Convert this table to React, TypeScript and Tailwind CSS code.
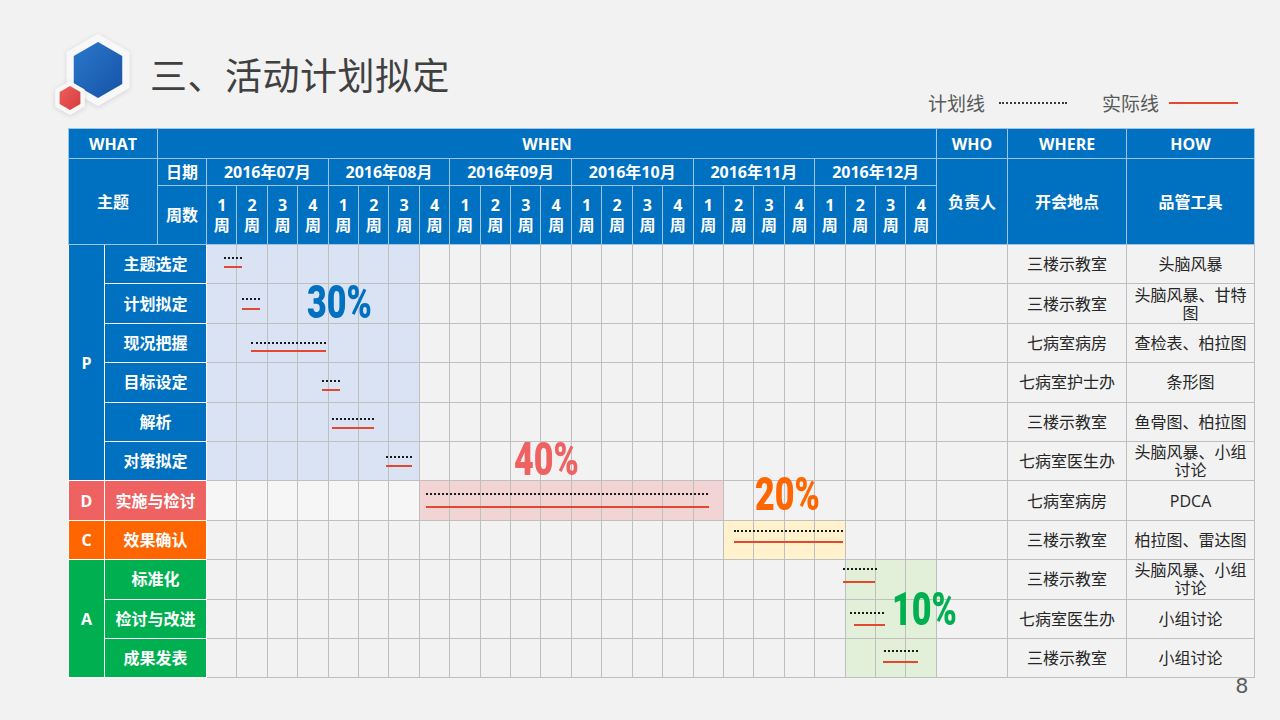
import React from 'react';

type Row = {
  phase?: { label: string; span: number; bg: string };
  theme: string;
  bg: string;
  where: string;
  how: string;
  shadeFrom: number;
  shadeTo: number;
  shade: string;
  rest?: string;
};

const rows: Row[] = [
  { phase: { label: 'P', span: 6, bg: 'bg-[#0070c0]' }, theme: '主题选定', bg: 'bg-[#0070c0]', where: '三楼示教室', how: '头脑风暴', shadeFrom: 0, shadeTo: 6, shade: 'bg-[#dae3f3]' },
  { theme: '计划拟定', bg: 'bg-[#0070c0]', where: '三楼示教室', how: '头脑风暴、甘特图', shadeFrom: 0, shadeTo: 6, shade: 'bg-[#dae3f3]' },
  { theme: '现况把握', bg: 'bg-[#0070c0]', where: '七病室病房', how: '查检表、柏拉图', shadeFrom: 0, shadeTo: 6, shade: 'bg-[#dae3f3]' },
  { theme: '目标设定', bg: 'bg-[#0070c0]', where: '七病室护士办', how: '条形图', shadeFrom: 0, shadeTo: 6, shade: 'bg-[#dae3f3]' },
  { theme: '解析', bg: 'bg-[#0070c0]', where: '三楼示教室', how: '鱼骨图、柏拉图', shadeFrom: 0, shadeTo: 6, shade: 'bg-[#dae3f3]' },
  { theme: '对策拟定', bg: 'bg-[#0070c0]', where: '七病室医生办', how: '头脑风暴、小组讨论', shadeFrom: 0, shadeTo: 6, shade: 'bg-[#dae3f3]' },
  { phase: { label: 'D', span: 1, bg: 'bg-[#ee6262]' }, theme: '实施与检讨', bg: 'bg-[#ee6262]', where: '七病室病房', how: 'PDCA', shadeFrom: 7, shadeTo: 16, shade: 'bg-[#f2d4d4]', rest: 'lighter' },
  { phase: { label: 'C', span: 1, bg: 'bg-[#ff6600]' }, theme: '效果确认', bg: 'bg-[#ff6600]', where: '三楼示教室', how: '柏拉图、雷达图', shadeFrom: 17, shadeTo: 20, shade: 'bg-[#fff2cc]' },
  { phase: { label: 'A', span: 3, bg: 'bg-[#00b050]' }, theme: '标准化', bg: 'bg-[#00b050]', where: '三楼示教室', how: '头脑风暴、小组讨论', shadeFrom: 21, shadeTo: 23, shade: 'bg-[#e2f0d9]' },
  { theme: '检讨与改进', bg: 'bg-[#00b050]', where: '七病室医生办', how: '小组讨论', shadeFrom: 21, shadeTo: 23, shade: 'bg-[#e2f0d9]' },
  { theme: '成果发表', bg: 'bg-[#00b050]', where: '三楼示教室', how: '小组讨论', shadeFrom: 21, shadeTo: 23, shade: 'bg-[#e2f0d9]' },
];

const months = ['2016年07月', '2016年08月', '2016年09月', '2016年10月', '2016年11月', '2016年12月'];
const weeks = Array.from({ length: 24 }, (_, i) => (i % 4) + 1);

// page coordinates of plan (dotted) and actual (red) lines
const bars = [
  { plan: [224, 242, 258], act: [224, 242, 267] },
  { plan: [242, 260, 299], act: [242, 260, 309] },
  { plan: [251, 326, 343], act: [251, 326, 351] },
  { plan: [322, 340, 381], act: [322, 340, 390] },
  { plan: [332, 374, 419], act: [332, 374, 428] },
  { plan: [386, 412, 457], act: [386, 412, 466] },
  { plan: [426, 708, 494], act: [426, 709, 507] },
  { plan: [734, 843, 531], act: [734, 843, 542] },
  { plan: [843, 877, 569], act: [843, 875, 582] },
  { plan: [850, 884, 613], act: [854, 885, 625] },
  { plan: [884, 918, 651], act: [883, 918, 662] },
];

const percents = [
  { text: '30%', x: 307, y: 285, color: 'text-[#0070c0]' },
  { text: '40%', x: 514, y: 442, color: 'text-[#ee6262]' },
  { text: '20%', x: 755, y: 477, color: 'text-[#ff6600]' },
  { text: '10%', x: 892, y: 592, color: 'text-[#00b050]' },
];

const OX = 68;
const OY = 128;

const hex = (cx: number, cy: number, r: number) =>
  [
    [cx, cy - r],
    [cx + 0.866 * r, cy - 0.5 * r],
    [cx + 0.866 * r, cy + 0.5 * r],
    [cx, cy + r],
    [cx - 0.866 * r, cy + 0.5 * r],
    [cx - 0.866 * r, cy - 0.5 * r],
  ]
    .map((p) => p.join(','))
    .join(' ');

const Logo = () => (
  <svg viewBox="0 0 92 92" className="w-[92px] h-[92px] shrink-0 mt-[28px] ml-[50px]">
    <defs>
      <linearGradient id="blueHex" x1="0" y1="0" x2="1" y2="1">
        <stop offset="0" stopColor="#2b78cc" />
        <stop offset="1" stopColor="#1553a6" />
      </linearGradient>
      <linearGradient id="redHex" x1="0" y1="0" x2="1" y2="1">
        <stop offset="0" stopColor="#ee5f5f" />
        <stop offset="1" stopColor="#d63c3c" />
      </linearGradient>
      <filter id="soft" x="-30%" y="-30%" width="160%" height="160%">
        <feDropShadow dx="0" dy="1" stdDeviation="2.5" floodColor="#000" floodOpacity="0.14" />
      </filter>
    </defs>
    <polygon points={hex(48, 42, 36)} fill="#f8f8f8" filter="url(#soft)" />
    <polygon points={hex(48, 42, 28)} fill="url(#blueHex)" />
    <polygon points={hex(20, 70, 17)} fill="#f8f8f8" filter="url(#soft)" />
    <polygon points={hex(20, 70, 12)} fill="url(#redHex)" />
  </svg>
);

const hd = 'border border-[#9ec3e8] bg-[#0070c0] text-white font-bold text-[16px] text-center p-0';
const bd = 'border border-[#bfbfbf] p-0';

export default function App() {
  return (
    <div
      className="w-[1280px] h-[720px] bg-[#f2f2f2] overflow-hidden"
      style={{ fontFamily: '"Open Sans", "Noto Sans CJK SC", sans-serif' }}
    >
      {/* header */}
      <div className="h-[128px] flex items-start">
        <Logo />
        <h1 className="ml-[8px] mt-[56px] text-[37px] leading-none font-normal text-[#404040] tracking-[0.5px]" style={{ fontFamily: '"Noto Sans CJK SC", sans-serif' }}>
          三、活动计划拟定
        </h1>
        <div className="ml-auto mt-[93px] mr-[42px] flex items-center text-[19px] leading-[20px] text-[#595959]" style={{ fontFamily: '"Noto Sans CJK SC", sans-serif' }}>
          <span>计划线</span>
          <span className="ml-[14px] w-[68px] border-t-2 border-dotted border-[#3a3a3a]" />
          <span className="ml-[35px]">实际线</span>
          <span className="ml-[10px] w-[69px] h-[2px] bg-[#e2492f]" />
        </div>
      </div>

      {/* table */}
      <div className="relative ml-[68px] w-[1186px]">
        <table className="table-fixed border-collapse w-[1186px]">
          <colgroup>
            <col className="w-[36px]" />
            <col className="w-[53px]" />
            <col className="w-[49px]" />
            {weeks.map((_, i) => (
              <col key={i} className="w-[30.4167px]" />
            ))}
            <col className="w-[71px]" />
            <col className="w-[119px]" />
            <col className="w-[128px]" />
          </colgroup>
          <thead>
            <tr className="h-[30px]">
              <th colSpan={2} className={hd}>WHAT</th>
              <th colSpan={25} className={hd}>WHEN</th>
              <th className={hd}>WHO</th>
              <th className={hd}>WHERE</th>
              <th className={hd}>HOW</th>
            </tr>
            <tr className="h-[27px]">
              <th colSpan={2} rowSpan={2} className={hd}>主题</th>
              <th className={hd}>日期</th>
              {months.map((m) => (
                <th key={m} colSpan={4} className={hd}>{m}</th>
              ))}
              <th rowSpan={2} className={hd}>负责人</th>
              <th rowSpan={2} className={hd}>开会地点</th>
              <th rowSpan={2} className={hd}>品管工具</th>
            </tr>
            <tr className="h-[59px]">
              <th className={hd}>周数</th>
              {weeks.map((w, i) => (
                <th key={i} className={`${hd} leading-[20px]`}>
                  {w}
                  <br />周
                </th>
              ))}
            </tr>
          </thead>
          <tbody className="text-[16px] text-[#262626]">
            {rows.map((r, ri) => (
              <tr key={ri} className="h-[39.4px]">
                {r.phase && (
                  <td rowSpan={r.phase.span} className={`border border-white ${r.phase.bg} text-white font-bold text-center p-0`}>
                    {r.phase.label}
                  </td>
                )}
                <td colSpan={2} className={`border border-white ${r.bg} text-white font-bold text-center p-0`}>
                  {r.theme}
                </td>
                {weeks.map((_, wi) => {
                  const on = wi >= r.shadeFrom && wi <= r.shadeTo;
                  const light = r.rest === 'lighter' && wi < r.shadeFrom;
                  return (
                    <td
                      key={wi}
                      className={`${bd} ${on ? r.shade : light ? 'bg-[#f6f6f6]' : 'bg-[#f2f2f2]'}`}
                    />
                  );
                })}
                <td className={`${bd} bg-[#f2f2f2]`} />
                <td className={`${bd} bg-[#f2f2f2] text-center`}>{r.where}</td>
                <td className={`${bd} bg-[#f2f2f2] text-center px-[4px] leading-[18px]`}>{r.how}</td>
              </tr>
            ))}
          </tbody>
        </table>

        {/* gantt overlay */}
        <div className="absolute inset-0 pointer-events-none">
          {bars.map((b, i) => (
            <React.Fragment key={i}>
              <div
                className="absolute border-t-2 border-dotted border-[#1a1a1a]"
                style={{ left: b.plan[0] - OX, top: b.plan[2] - OY - 1, width: b.plan[1] - b.plan[0] }}
              />
              <div
                className="absolute h-[2px] bg-[#e2492f]"
                style={{ left: b.act[0] - OX, top: b.act[2] - OY - 1, width: b.act[1] - b.act[0] }}
              />
            </React.Fragment>
          ))}
          {percents.map((p) => (
            <span
              key={p.text}
              className={`absolute text-[46px] leading-none font-black origin-left scale-x-[0.74] ${p.color}`}
              style={{ left: p.x - OX, top: p.y - OY - 6, fontFamily: 'Roboto, "Liberation Sans", sans-serif' }}
            >
              {p.text}
            </span>
          ))}
        </div>

        <div className="text-right pr-[6px] text-[22px] leading-none text-[#595959] -mt-[3px]" style={{ fontFamily: '"Liberation Sans", sans-serif' }}>
          8
        </div>
      </div>
    </div>
  );
}
